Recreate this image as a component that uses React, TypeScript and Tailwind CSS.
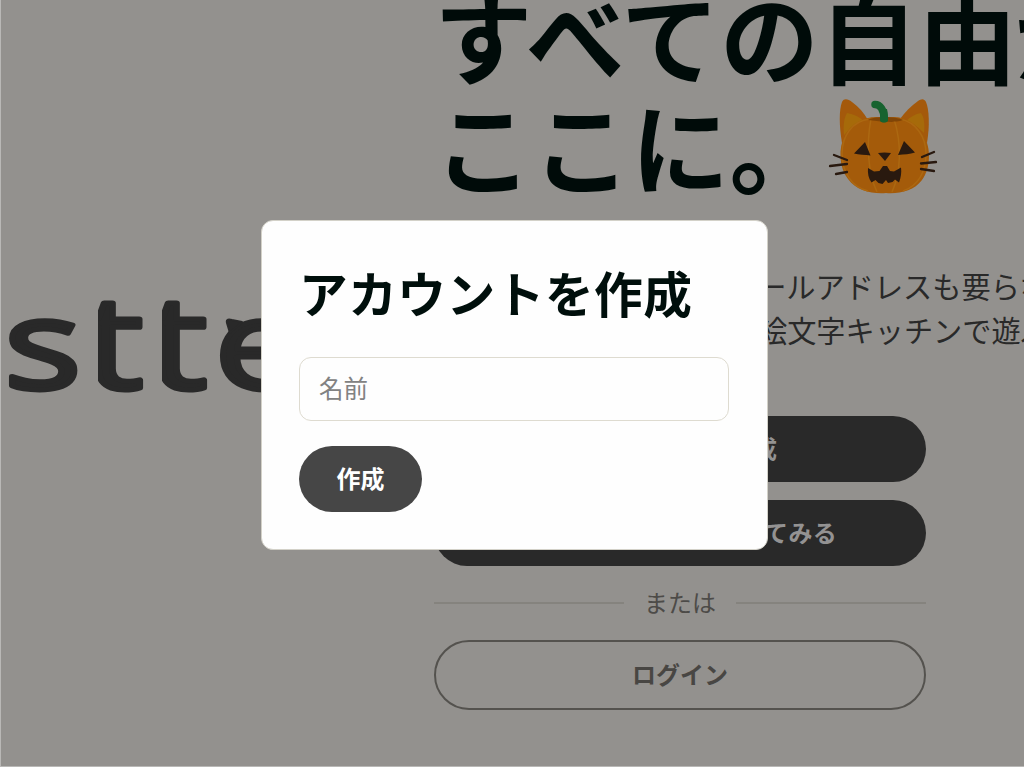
import React from "react";

function PumpkinCat() {
  return (
    <svg viewBox="0 0 130 115" className="h-[115px] w-[130px] shrink-0" fill="none">
      <path d="M22 53C19 35 19 20 22 12c2-4 6-3 10 0 7 5 12 11 16 18z" fill="#a4590b" />
      <path d="M107 53c3-18 2-34-1-41-2-4-5-3-8-1-7 5-13 11-18 18z" fill="#a4590b" />
      <path d="M24 45c-1-10 0-17 3-22 7 1 13 4 18 9-8 3-15 7-21 13z" fill="#a66a0a" />
      <path d="M104 43c1-9 0-16-3-20-6 1-11 4-15 8 8 3 13 7 18 12z" fill="#a66a0a" />
      <path d="M65 28c-16-4-33 4-40 17-7 13-6 33 3 44 9 12 24 15 38 14 13 1 28-2 36-13 9-12 9-32 2-44-8-14-23-22-39-18z" fill="#a45b0a" />
      <path d="M50 29c-18 2-28 17-28 35 0 17 9 33 26 37M51 29c-5 26-3 54 6 73M74 29c8 25 7 53-2 73M80 29c16 3 26 18 26 35 0 18-8 32-23 37" stroke="#ac6811" strokeWidth="1.5" />
      <path d="M48 30c6-4 27-4 35 0-4 2-9 1-11 2-7 0-15-1-24-2z" fill="#804507" />
      <path d="M55 14.5c5 0 9 5 9 14" stroke="#17632f" strokeWidth="7.5" strokeLinecap="round" />
      <path d="M60 27c1-3 1-6 0-8h7c1 4 1 8 1 12-2 2-6 2-8 0z" fill="#17632f" />
      <path d="M45 52 34 63.5c5 1 11 1.500 16.500 2zM84 51l-6 14c6-.5 12-1 17-2.500zM58 63c4-.7 9-.7 13 0l-6 8z" fill="#29190f" />
      <path d="M48 78l6 3.500 5.500-.5 3.500-5h4l3 5 4 .5 7-4c.7 5 0 10-2 15l-4-3-2.500 2.500-4.500 1-2-3-3.500 4-4-1-3-3-4 2.500c-3-4-4-9.500-3.500-14.500z" fill="#29190f" />
      <path d="m14 65 13 5M10 76l17-2M16 84l11-2M102 67l12-5M101 73.500l15-1.500M101 79l13 2" stroke="#29190f" strokeWidth="2.300" strokeLinecap="round" />
    </svg>
  );
}

function Logo() {
  return (
    <svg viewBox="0 0 262 130" className="mt-[279px] h-[130px] w-[262px]" role="img" aria-label="stte">
      <clipPath id="first-stem">
        <path d="M97 30q0-12 10-12h40v100H97z" />
      </clipPath>
      <clipPath id="second-stem">
        <path d="M161 30q0-12 10-12h40v100h-50z" />
      </clipPath>
      <g fill="#292929" stroke="#292929" strokeWidth="5" strokeLinejoin="round" className="font-['Open_Sans',sans-serif] font-normal" fontSize="127">
        <text transform="translate(3 109.500) scale(1.280 .98)">s</text>
        <g clipPath="url(#first-stem)">
          <text transform="translate(82 109.500) scale(1.340 1.020)">t</text>
        </g>
        <g clipPath="url(#second-stem)">
          <text transform="translate(146 109.500) scale(1.340 1.020)">t</text>
        </g>
        <text transform="translate(213 109.500) scale(1.300 .98)">e</text>
      </g>
      <path d="M229 54l-3-10c-1-4 2-4 5-3l10 2z" fill="#292929" stroke="#292929" strokeWidth="2" strokeLinejoin="round" />
    </svg>
  );
}

function PrimaryButton({ children }: { children: React.ReactNode }) {
  return (
    <button className="flex h-[66px] w-full items-center justify-center rounded-full bg-[#292929] pb-0.5 text-2xl font-bold tracking-[0.3px] text-[#939292]">
      {children}
    </button>
  );
}

function Welcome() {
  return (
    <main className="flex h-full w-full border-b border-l border-[#b9b8b6]">
      <div className="w-[433px] shrink-0">
        <Logo />
      </div>
      <div className="w-[590px] shrink-0 whitespace-nowrap">
        <h1 className="-mt-[21px] h-[220px] text-[98.5px] leading-[110px] font-bold text-[#000b09]">
          <span className="block tracking-[0.5px]">すべての自由<span className="-ml-[3px]">が</span></span>
          <span className="flex">
            ここに。<span className="-ml-[8px] mt-px block h-[108px]"><PumpkinCat /></span>
          </span>
        </h1>
        <div className="mt-[64px] text-[29.2px] leading-[44px] text-[#292929]">
          <p className="pl-[294px]">メールアドレスも要らない</p>
          <p className="pl-[324px]">絵文字キッチンで遊ぶ</p>
        </div>
        <div className="mt-[65px] flex w-[492px] flex-col gap-[18px]">
          <PrimaryButton>アカウントを作成</PrimaryButton>
          <PrimaryButton>アカウントなしで使ってみる</PrimaryButton>
        </div>
        <div className="flex h-[74px] w-[492px] items-center gap-5 text-2xl text-[#4d4b48]">
          <span className="h-0.5 flex-1 bg-[#85837e]" />
          <span className="pb-0.5">または</span>
          <span className="h-0.5 flex-1 bg-[#85837e]" />
        </div>
        <button className="h-[70px] w-[492px] rounded-full border-2 border-[#54524e] pb-0.5 text-2xl font-bold text-[#484643]">
          ログイン
        </button>
      </div>
    </main>
  );
}

function CreateAccountDialog() {
  return (
    <div role="dialog" className="absolute top-[220px] left-[261px] h-[330px] w-[507px] rounded-xl border border-[#d3d1c8] bg-[#fefefe] px-[37px] pt-[35px]">
      <h2 className="text-[48.700px] leading-[72px] font-bold tracking-[0.5px] whitespace-nowrap text-[#000f0c]">アカウントを作成</h2>
      <input
        placeholder="名前"
        className="mt-[29px] block h-16 w-[430px] rounded-xl border-[1.5px] border-[#dedbd0] bg-transparent px-[19px] pb-1 text-[24.5px] outline-none placeholder:text-[#828282]"
      />
      <button className="mt-[25px] h-[66px] w-[123px] rounded-full bg-[#464646] pb-0.5 text-2xl font-bold text-white">作成</button>
    </div>
  );
}

export default function App() {
  return (
    <div className="relative h-[767px] w-[1024px] overflow-hidden bg-[#93918e] font-['Noto_Sans_CJK_JP',sans-serif]" lang="ja">
      <Welcome />
      <CreateAccountDialog />
    </div>
  );
}
